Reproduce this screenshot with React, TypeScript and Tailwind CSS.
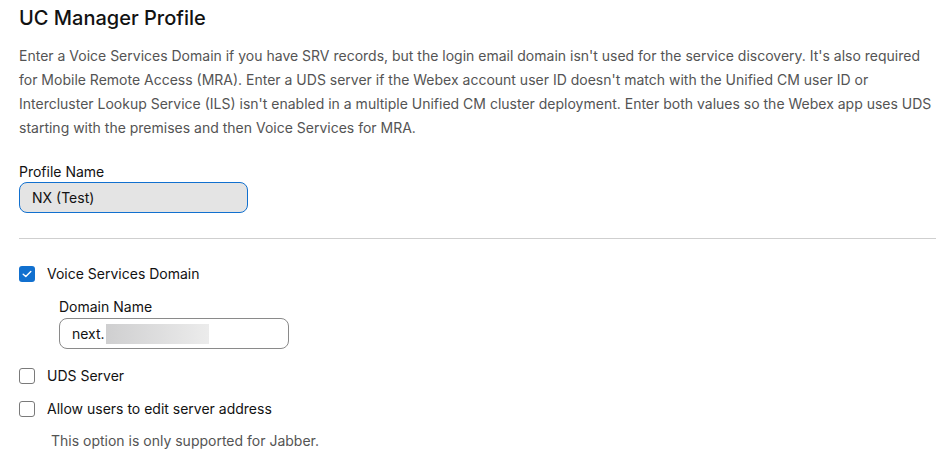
import React from 'react';

const Check = ({ checked }: { checked?: boolean }) =>
  checked ? (
    <span className="flex h-4 w-4 items-center justify-center rounded-[3px] bg-[#1170cf]">
      <svg width="10" height="8" viewBox="0 0 10 8" fill="none">
        <path d="M1.2 4.2 3.8 6.6 8.8 1.4" stroke="white" strokeWidth="1.4" strokeLinecap="round" strokeLinejoin="round" />
      </svg>
    </span>
  ) : (
    <span className="block h-4 w-4 rounded-[3px] border border-[#7a7a7a] bg-white" />
  );

export default function App() {
  return (
    <div className="h-[458px] w-[936px] overflow-hidden bg-white pl-[19px] pt-[4px] text-[#121212] font-['Inter',sans-serif]">
      <h1 className="text-[20px] leading-[28px] font-medium">UC Manager Profile</h1>
      <p className="mt-[12px] text-[14px] leading-[24px] text-[#545454]">
        Enter a Voice Services Domain if you have SRV records, but the login email domain isn't used for the service discovery. It's also required for Mobile Remote Access (MRA). Enter a UDS server if the Webex account user ID doesn't match with the Unified CM user ID or Intercluster Lookup Service (ILS) isn't enabled in a multiple Unified CM cluster deployment. Enter both values so the Webex app uses UDS starting with the premises and then Voice Services for MRA.
      </p>

      <div className="mt-[22px] text-[14px] leading-[20px]">Profile Name</div>
      <div className="flex h-[31px] w-[229px] items-center rounded-[8px] border border-[#1170cf] bg-[#e4e4e4] px-[12px] text-[14px]">
        NX (Test)
      </div>

      <div className="mt-[25px] h-px bg-[#cfcfcf]" />

      <label className="mt-[25px] flex items-center gap-[12px] text-[14px] leading-[20px]">
        <Check checked />
        Voice Services Domain
      </label>

      <div className="ml-[40px] mt-[13px]">
        <div className="text-[14px] leading-[20px]">Domain Name</div>
        <div className="mt-[1px] flex h-[31px] w-[230px] items-center rounded-[8px] border border-[#8a8a8a] bg-white pl-[12px] text-[14px]">
          next.
          <span className="ml-[1px] h-[20px] w-[103px] bg-gradient-to-r from-[#cfcfd0] to-[#ececec]" />
        </div>
      </div>

      <label className="mt-[17px] flex items-center gap-[12px] text-[14px] leading-[20px]">
        <Check />
        UDS Server
      </label>

      <label className="mt-[13px] flex items-center gap-[12px] text-[14px] leading-[20px]">
        <Check />
        Allow users to edit server address
      </label>

      <div className="ml-[32px] mt-[12px] text-[14px] leading-[20px] text-[#545454]">
        This option is only supported for Jabber.
      </div>
    </div>
  );
}
